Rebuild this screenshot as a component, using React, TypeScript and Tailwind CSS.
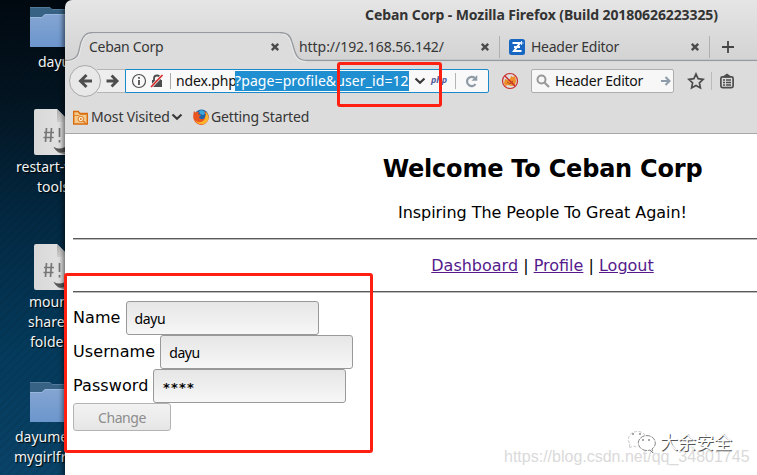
import type { ReactNode } from 'react';

const uiFont = "font-['Noto_Sans',sans-serif]";

function Folder() {
  return (
    <svg width="60" height="42" viewBox="0 0 60 42" className="block">
      <defs>
        <linearGradient id="folder" x1="0" y1="0" x2="0" y2="1">
          <stop offset="0" stopColor="#84a5d2" />
          <stop offset="1" stopColor="#6c96cd" />
        </linearGradient>
      </defs>
      <path d="M0 1.5h20l2 2h38v20H0z" fill="#376283" />
      <path d="M0 1.5h20l2 2h38" stroke="#527b9b" fill="none" />
      <path d="M0 11h12l3-3h45v33H0z" fill="url(#folder)" />
      <path d="M0 11.5h12l3-3h45" stroke="#99b6dc" fill="none" />
    </svg>
  );
}

function Script() {
  return (
    <svg width="44" height="46" viewBox="0 0 44 46" className="block">
      <defs>
        <linearGradient id="paper" x1="0" y1="0" x2="1" y2="0">
          <stop offset="0" stopColor="#d8d8d8" />
          <stop offset="1" stopColor="#e4e4e4" />
        </linearGradient>
        <linearGradient id="fold" x1="0" y1="0" x2="1" y2="1">
          <stop offset="0" stopColor="#aaa" />
          <stop offset="1" stopColor="#eee" />
        </linearGradient>
      </defs>
      <path d="M2 0h21l13 13v33H2a2 2 0 0 1-2-2V2a2 2 0 0 1 2-2z" fill="url(#paper)" />
      <path d="M23 0l13 13H23z" fill="url(#fold)" />
      <path d="M20 38q5 3 11 0v5q-7 3-11-5z" fill="#555" />
      <path d="M20 38q3 7 12 6" stroke="#777" fill="none" />
      <path d="M12.500 19l-1 14M17.500 19l-1 14M10 23.500h10M9.500 28.500h10M25.500 19v9M25.500 31v2.500" stroke="#777" strokeWidth="1.700" fill="none" />
    </svg>
  );
}

function DesktopLabel({ children, pad }: { children: string; pad: string }) {
  return <div className={`h-5 whitespace-nowrap text-[14px] leading-5 text-[#f0f4f6] [text-shadow:1px_1px_1px_#000] ${pad}`}>{children}</div>;
}

function CloseMark() {
  return (
    <svg width="10" height="10" viewBox="0 0 10 10" className="shrink-0">
      <path d="M1.800 1.800l6.400 6.400M8.200 1.800L1.800 8.200" stroke="#4b4b4b" strokeWidth="2.400" />
    </svg>
  );
}

function Chevron() {
  return (
    <svg width="12" height="8" viewBox="0 0 12 8" className="shrink-0">
      <path d="M1.500 1.500L6 5.700l4.500-4.200" stroke="#3a3a3a" strokeWidth="2.200" fill="none" />
    </svg>
  );
}

function Arrow({ left }: { left?: boolean }) {
  return (
    <svg width="15" height="16" viewBox="0 0 15 16" className={left ? '-scale-x-100' : ''}>
      <path d="M1 8h11M6.500 2L12.500 8l-6 6" stroke="#4d4d4d" strokeWidth="3" fill="none" />
    </svg>
  );
}

function TitleBar() {
  return (
    <div className="flex h-8 items-center justify-center pr-[2px] text-[14px] leading-5 font-bold text-[#333]">
      <span className="-mt-[3px] tracking-[-0.1px]">Ceban Corp - Mozilla Firefox (Build 20180626223325)</span>
    </div>
  );
}

function TabBar() {
  return (
    <div className="relative h-[30px] text-[14px] leading-5 text-[#363636]">
      <svg width="955" height="30" className="absolute inset-0">
        <path d="M0 28.500C16 28.500 13 18 16 10C18.500 3.500 21 .5 28 .5H214C222 .5 225 3 227 10C230 19 230 28.500 242 28.500H955V30H0z" fill="#dcdcdc" />
        <path d="M0 29.500C17 29.500 14 19 17 11C19.500 4 22 1.500 29 1.500H213C221 1.500 224 4 226 11C229 20 229 29.500 241 29.500H955" stroke="#ececec" fill="none" />
        <path d="M0 28.500C16 28.500 13 18 16 10C18.500 3.500 21 .5 28 .5H214C222 .5 225 3 227 10C230 19 230 28.500 242 28.500H955" stroke="#979ba0" strokeWidth="1.300" fill="none" />
      </svg>
      <div className="relative flex h-[29px] items-center pl-6">
        <div className="flex w-[210px] items-center justify-between pr-[19px]">
          <span className="tracking-[-0.3px]">Ceban Corp</span>
          <CloseMark />
        </div>
        <div className="flex h-[22px] w-[201px] items-center justify-between border-r border-[#b0b0b0] pr-[9px]">
          <span className="tracking-[-0.05px]">http://192.168.56.142/</span>
          <CloseMark />
        </div>
        <div className="flex h-[22px] w-[210px] items-center border-r border-[#b0b0b0] pr-[9px] pl-[9px]">
          <svg width="16" height="16" viewBox="0 0 16 16" className="mr-[6px]">
            <rect width="16" height="16" rx="2.500" fill="#1767c2" />
            <path d="M3.500 4h7.500L5 12h7.500M5 8h6" stroke="#fff" strokeWidth="2" fill="none" />
            <path d="M12.500 2v4M10.500 4h4" stroke="#d8e8f8" />
          </svg>
          <span className="grow tracking-[-0.25px]">Header Editor</span>
          <CloseMark />
        </div>
        <svg width="12" height="12" viewBox="0 0 12 12" className="ml-[12px]">
          <path d="M6 0v12M0 6h12" stroke="#444" strokeWidth="1.800" />
        </svg>
      </div>
    </div>
  );
}

function NavBar() {
  return (
    <div className="flex h-[38px] items-center pl-1 text-[14px] leading-5">
      <div className="z-10 flex size-8 shrink-0 items-center justify-center rounded-full border border-[#a9a9a9] bg-[#e8e8e8]">
        <Arrow left />
      </div>
      <div className="-ml-1 flex h-6 w-[28px] shrink-0 items-center justify-end border-y border-[#b5b5b5] bg-[#eee] pr-[5px]">
        <span className="scale-[0.92]"><Arrow /></span>
      </div>
      <div className="flex h-6 w-[364px] shrink-0 items-center rounded-r-[2px] border border-[#1b8acb] bg-[#f9f9f9] pl-[5px]">
        <svg width="16" height="16" viewBox="0 0 16 16" className="shrink-0">
          <circle cx="8" cy="8" r="6.500" stroke="#505050" strokeWidth="1.200" fill="none" />
          <path d="M8 7v5M8 4v1.800" stroke="#505050" strokeWidth="1.800" />
        </svg>
        <svg width="14" height="14" viewBox="0 0 14 14" className="ml-[3px] shrink-0">
          <path d="M4 6V4.500a3 3 0 0 1 6 0V6" stroke="#4d4d4d" strokeWidth="1.800" fill="none" />
          <path d="M2 6h10v7H2z" fill="#4d4d4d" />
          <path d="M1 13L12.500 1" stroke="#f9f9f9" strokeWidth="3" />
          <path d="M1 13L12.500 1" stroke="#d92d2d" strokeWidth="1.800" />
        </svg>
        <span className="ml-[6px] h-4 w-px shrink-0 bg-[#aaa]" />
        <span className="ml-[5px] w-[59px] shrink-0 tracking-[-0.15px] text-[#111]">ndex.php</span>
        <span className="h-5 w-[174px] shrink-0 overflow-hidden bg-[#208fd1] tracking-[0.1px] whitespace-nowrap text-white">?page=profile&amp;user_id=12</span>
        <span className="ml-[5px] flex"><Chevron /></span>
        <span className="ml-[5px] w-4 -translate-y-px text-[9px] font-bold text-[#515b9c] italic">php</span>
        <span className="ml-[8px] h-4 w-px shrink-0 bg-[#b5b5b5]" />
        <svg width="13" height="13" viewBox="0 0 12 12" className="ml-[9px]">
          <path d="M9.700 8.500A4.300 4.300 0 1 1 9 2.700" stroke="#8e9ba6" strokeWidth="2" fill="none" />
          <path d="M11.300 0v5.300H6z" fill="#8e9ba6" />
        </svg>
      </div>
      <svg width="18" height="18" viewBox="0 0 18 18" className="ml-3">
        <circle cx="9" cy="9" r="7.200" fill="#ddd" />
        <path d="M3 11l1-4 3 1 2-1 1-3 2 1 2-1 1 5-1 4-3 1-4-1-3 1z" fill="#ee8d2a" />
        <path d="M6 10l3 2 3-3" stroke="#a55218" fill="none" />
        <circle cx="9" cy="9" r="7.500" stroke="#cc2929" strokeWidth="1.200" fill="none" />
        <path d="M4 4l10 10" stroke="#cc2929" strokeWidth="1.500" />
      </svg>
      <div className="ml-3 flex h-6 w-[143px] items-center rounded-[2px] border border-[#adadad] bg-[#f7f7f7] pr-[2px] pl-1 text-[#111]">
        <svg width="14" height="14" viewBox="0 0 14 14" className="mr-[5px]">
          <circle cx="5.500" cy="5.500" r="4" stroke="#999" strokeWidth="2" fill="none" />
          <path d="M8.500 8.500l4.500 4.500" stroke="#999" strokeWidth="2.200" />
        </svg>
        <span className="grow tracking-[-0.25px] whitespace-nowrap">Header Editor</span>
        <svg width="10" height="10" viewBox="0 0 10 10">
          <path d="M0 5h8M4.500 1l4 4-4 4" stroke="#8d9ca8" strokeWidth="2" fill="none" />
        </svg>
      </div>
      <svg width="18" height="18" viewBox="0 0 18 18" className="ml-[13px]">
        <path d="M9 2l2.100 4.700 5.100.6-3.800 3.500 1 5.100L9 13.400l-4.400 2.500 1-5.100-3.800-3.500 5.100-.6z" stroke="#4d4d4d" strokeWidth="1.700" fill="none" />
      </svg>
      <span className="ml-[6px] h-[18px] w-px bg-[#bbb]" />
      <svg width="16" height="16" viewBox="0 0 16 16" className="ml-[7px]">
        <rect x="1.900" y="3.900" width="12.200" height="10.700" rx="1.500" stroke="#4d4d4d" strokeWidth="1.700" fill="none" />
        <path d="M4.500 4.500V3L8 .5 11.500 3v1.500z" fill="#4d4d4d" />
        <path d="M4 7h2m1 0h5M4 9.500h2m1 0h5M4 12h2m1 0h5" stroke="#4d4d4d" strokeWidth="1.300" />
      </svg>
    </div>
  );
}

function BookmarksBar() {
  return (
    <div className="flex h-[34px] items-center border-b border-[#a7a7a7] pl-2 text-[14px] leading-5 text-[#363636]">
      <svg width="15" height="15" viewBox="0 0 15 15" className="mt-px">
        <path d="M.7 14V1.500h4.600l1.500 2h7.500V14z" fill="#f5c98c" stroke="#d96c0e" strokeWidth="1.400" />
        <path d="M1 5.500h5l1-1h7" stroke="#e0862f" fill="none" />
        <circle cx="7.800" cy="9" r="2.700" fill="#fff0d8" stroke="#dc781d" />
        <path d="M10 11l2.500 2" stroke="#dc781d" strokeWidth="1.500" />
        <circle cx="7.800" cy="9" r="1" fill="#dc781d" />
      </svg>
      <span className="ml-[3px] w-[80px] tracking-[-0.15px] whitespace-nowrap">Most Visited</span>
      <span className="flex"><Chevron /></span>
      <svg width="16" height="16" viewBox="0 0 16 16" className="ml-[10px]">
        <circle cx="8.500" cy="7.500" r="7" fill="#1b66ad" />
        <path d="M6 2q4-2 7 2l-3 2-3-1z" fill="#3ba6d9" />
        <path d="M1 2l1.500 1.500Q4 2.300 6 3L5 5l3 1-2 2c1 3 5 3 6 0 1-3 0-4-1-6 5 2 6 7 3 11-4 5-11 3-13-2C-.5 8 .3 5 1 2z" fill="#e95420" />
        <path d="M13 3c4 4 3 10-2 12-4 1-8-1-9-4 4 4 9 2 10-2 .6-2 1-3 1-6z" fill="#fbb52c" />
      </svg>
      <span className="ml-[2px] tracking-[-0.17px]">Getting Started</span>
    </div>
  );
}

function Field({ label, children }: { label: string; children: ReactNode }) {
  return (
    <label className="flex h-[34px] items-center">
      <span className="-mt-[2px] mr-[5px] tracking-[0.08px]">{label}</span>
      <span className={`flex h-[34px] w-[193px] items-center rounded-[3px] border border-[#999] bg-linear-to-b from-[#e6e6e6] to-[#f7f7f7] pl-2 text-[14px] tracking-[-0.4px] ${uiFont}`}>
        {children}
      </span>
    </label>
  );
}

function Page() {
  return (
    <div className="h-[341px] bg-white px-2 pt-[21px] font-['DejaVu_Sans',sans-serif] text-[16px] leading-[19px] text-black">
      <h2 className="text-center text-[24px] leading-7 font-bold tracking-[-0.22px]">Welcome To Ceban Corp</h2>
      <p className="mt-[20px] text-center tracking-[-0.05px]">Inspiring The People To Great Again!</p>
      <hr className="mt-4 h-[2px] border-t border-b border-t-[#5a5a5a] border-b-[#bbb]" />
      <nav className="mt-4 text-center text-black">
        <a className="text-[#551a8b] underline">Dashboard</a> | <a className="text-[#551a8b] underline">Profile</a> | <a className="text-[#551a8b] underline">Logout</a>
      </nav>
      <hr className="mt-4 h-[2px] border-t border-b border-t-[#5a5a5a] border-b-[#bbb]" />
      <form className="mt-2">
        <Field label="Name">dayu</Field>
        <Field label="Username">dayu</Field>
        <Field label="Password"><span className="pt-[3px] font-['DejaVu_Sans_Mono',monospace] text-[13px] font-bold tracking-[0.2px]">****</span></Field>
        <button type="button" className={`flex h-7 w-[98px] items-center justify-center rounded-[3px] border border-[#b3b3b3] bg-linear-to-b from-[#f2f2f2] to-[#e6e6e6] text-[14px] tracking-[-0.4px] text-[#8d8d8d] ${uiFont}`}>Change</button>
      </form>
    </div>
  );
}

export default function App() {
  return (
    <div className={`relative flex h-[475px] w-[757px] overflow-hidden bg-[#04334f] bg-[repeating-linear-gradient(135deg,transparent_0_4px,rgba(0,0,0,0.06)_4px_6px),linear-gradient(178deg,#010910_0%,#031522_20%,#032a44_45%,#043a5b_70%,#0b456b_100%)] ${uiFont}`}>
      <aside className="flex w-[65px] shrink-0 flex-col overflow-hidden pt-[6px]">
        <div className="h-[103px]">
          <div className="pl-[30px]"><Folder /></div>
          <div className="h-1" />
          <DesktopLabel pad="pl-[38px]">dayu</DesktopLabel>
        </div>
        <div className="h-[135px]">
          <div className="pl-[34px]"><Script /></div>
          <div className="h-[2px]" />
          <DesktopLabel pad="pl-[16px]">restart-vm-</DesktopLabel>
          <DesktopLabel pad="pl-[37px]">tools</DesktopLabel>
        </div>
        <div className="h-[137px]">
          <div className="pl-[34px]"><Script /></div>
          <div className="h-[2px]" />
          <DesktopLabel pad="pl-[29px]">mount-</DesktopLabel>
          <DesktopLabel pad="pl-[28px]">shared-</DesktopLabel>
          <DesktopLabel pad="pl-[30px]">folders</DesktopLabel>
        </div>
        <div>
          <div className="pl-[30px]"><Folder /></div>
          <div className="h-1" />
          <DesktopLabel pad="pl-[15px]">dayumei-</DesktopLabel>
          <DesktopLabel pad="pl-[14px]">mygirlfriend</DesktopLabel>
        </div>
      </aside>
      <main className="h-[475px] w-[955px] shrink-0 overflow-hidden rounded-tl-[7px] bg-[#dcdcdc] bg-[linear-gradient(#e5e5e5,#d3d3d3_60px,#dcdcdc_61px)] shadow-[0_0_5px_2px_rgba(0,0,0,0.55)]">
        <TitleBar />
        <TabBar />
        <NavBar />
        <BookmarksBar />
        <Page />
      </main>
      <div className="absolute top-[62px] left-[337px] z-20 h-[45px] w-[105px] rounded-[3px] border-3 border-[#ff2012]" />
      <div className="absolute top-[273px] left-[64px] z-20 h-[180px] w-[309px] rounded-[3px] border-3 border-[#ff2012]" />
      <div className="absolute top-[446px] left-[504px] font-['Liberation_Sans',sans-serif] text-[16px] leading-[22px] whitespace-nowrap text-[#dadada]">https://blog.csdn.net/qq_34801745</div>
      <div className="absolute top-[427px] left-[626px] flex items-center">
        <svg width="30" height="28" viewBox="0 0 30 28">
          <path d="M4 17l-1 4 4-2a11 9 0 0 0 5 1M19 8A9 8 0 1 0 4 17" fill="#fff" stroke="#bbb" strokeWidth=".8" strokeDasharray="3 1.500" />
          <path d="M24 23l3 3-1-4a8.500 7.500 0 1 0-2 1z" fill="#fff" stroke="#777" strokeWidth=".9" strokeDasharray="5 1" />
          <path d="M6 7h2M13 7h2M16 13h2M22 13h2" stroke="#555" strokeWidth="1.200" />
        </svg>
        <span className="ml-[4px] font-['Noto_Sans_CJK_SC',sans-serif] text-[18px] leading-[26px] text-white [text-shadow:1px_1px_0_#555]">大余安全</span>
      </div>
    </div>
  );
}
